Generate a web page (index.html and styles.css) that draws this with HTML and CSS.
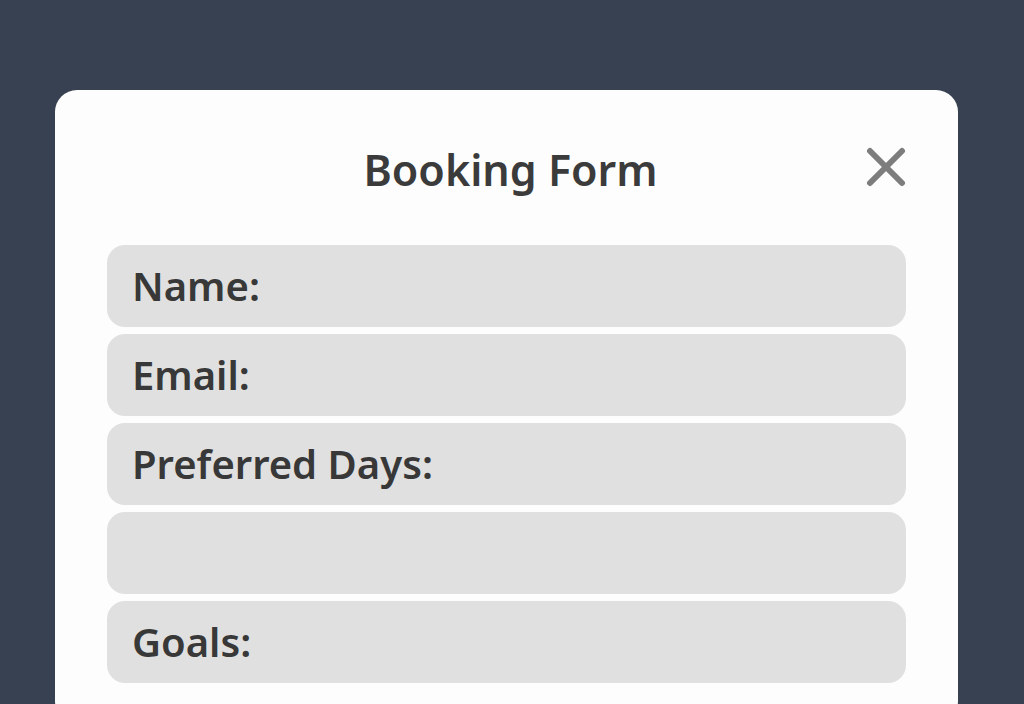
FILE: index.html
```html
<!DOCTYPE html>
<html>
    <head>
        <title>Booking Form</title>
        <link rel="stylesheet" href="styles.css">
    </head>
    <body>
        <div class="modal">
            <div class="cabecalho">
                <h1>Booking Form</h1>
                <button class="fechar" aria-label="Close">
                    <svg width="40" height="40" viewBox="0 0 40 40">
                        <path d="M4 4 L36 36 M36 4 L4 36" stroke="#7d7d7d" stroke-width="6" stroke-linecap="round"/>
                    </svg>
                </button>
            </div>
            <div class="campos">
                <div class="campo">Name:</div>
                <div class="campo">Email:</div>
                <div class="campo">Preferred Days:</div>
                <div class="campo"></div>
                <div class="campo">Goals:</div>
            </div>
        </div>
    </body>
</html>
```

FILE: styles.css
```css
body{
    margin: 0;
    height: 704px;
    overflow: hidden;
    background-color: #374151;
    font-family: "Noto Sans", "Open Sans", sans-serif;
}
.modal{
    width: 903px;
    margin: 90px 0 0 55px;
    padding: 0 52px 40px;
    box-sizing: border-box;
    background-color: #fdfdfd;
    border-radius: 22px;
}
.cabecalho{
    position: relative;
    padding-top: 50px;
    margin-bottom: 45px;
    text-align: center;
}
.cabecalho h1{
    margin: 0 0 0 8px;
    font-size: 43px;
    line-height: 60px;
    font-weight: 600;
    color: #3b3b3b;
}
.fechar{
    position: absolute;
    right: 0;
    top: 57px;
    width: 40px;
    height: 40px;
    padding: 0;
    border: none;
    background: none;
}
.campos{
    display: flex;
    flex-direction: column;
    gap: 7px;
}
.campo{
    height: 82px;
    padding-left: 25px;
    background-color: #e0e0e0;
    border-radius: 18px;
    font-size: 40px;
    font-weight: 600;
    line-height: 82px;
    color: #383838;
}
```
